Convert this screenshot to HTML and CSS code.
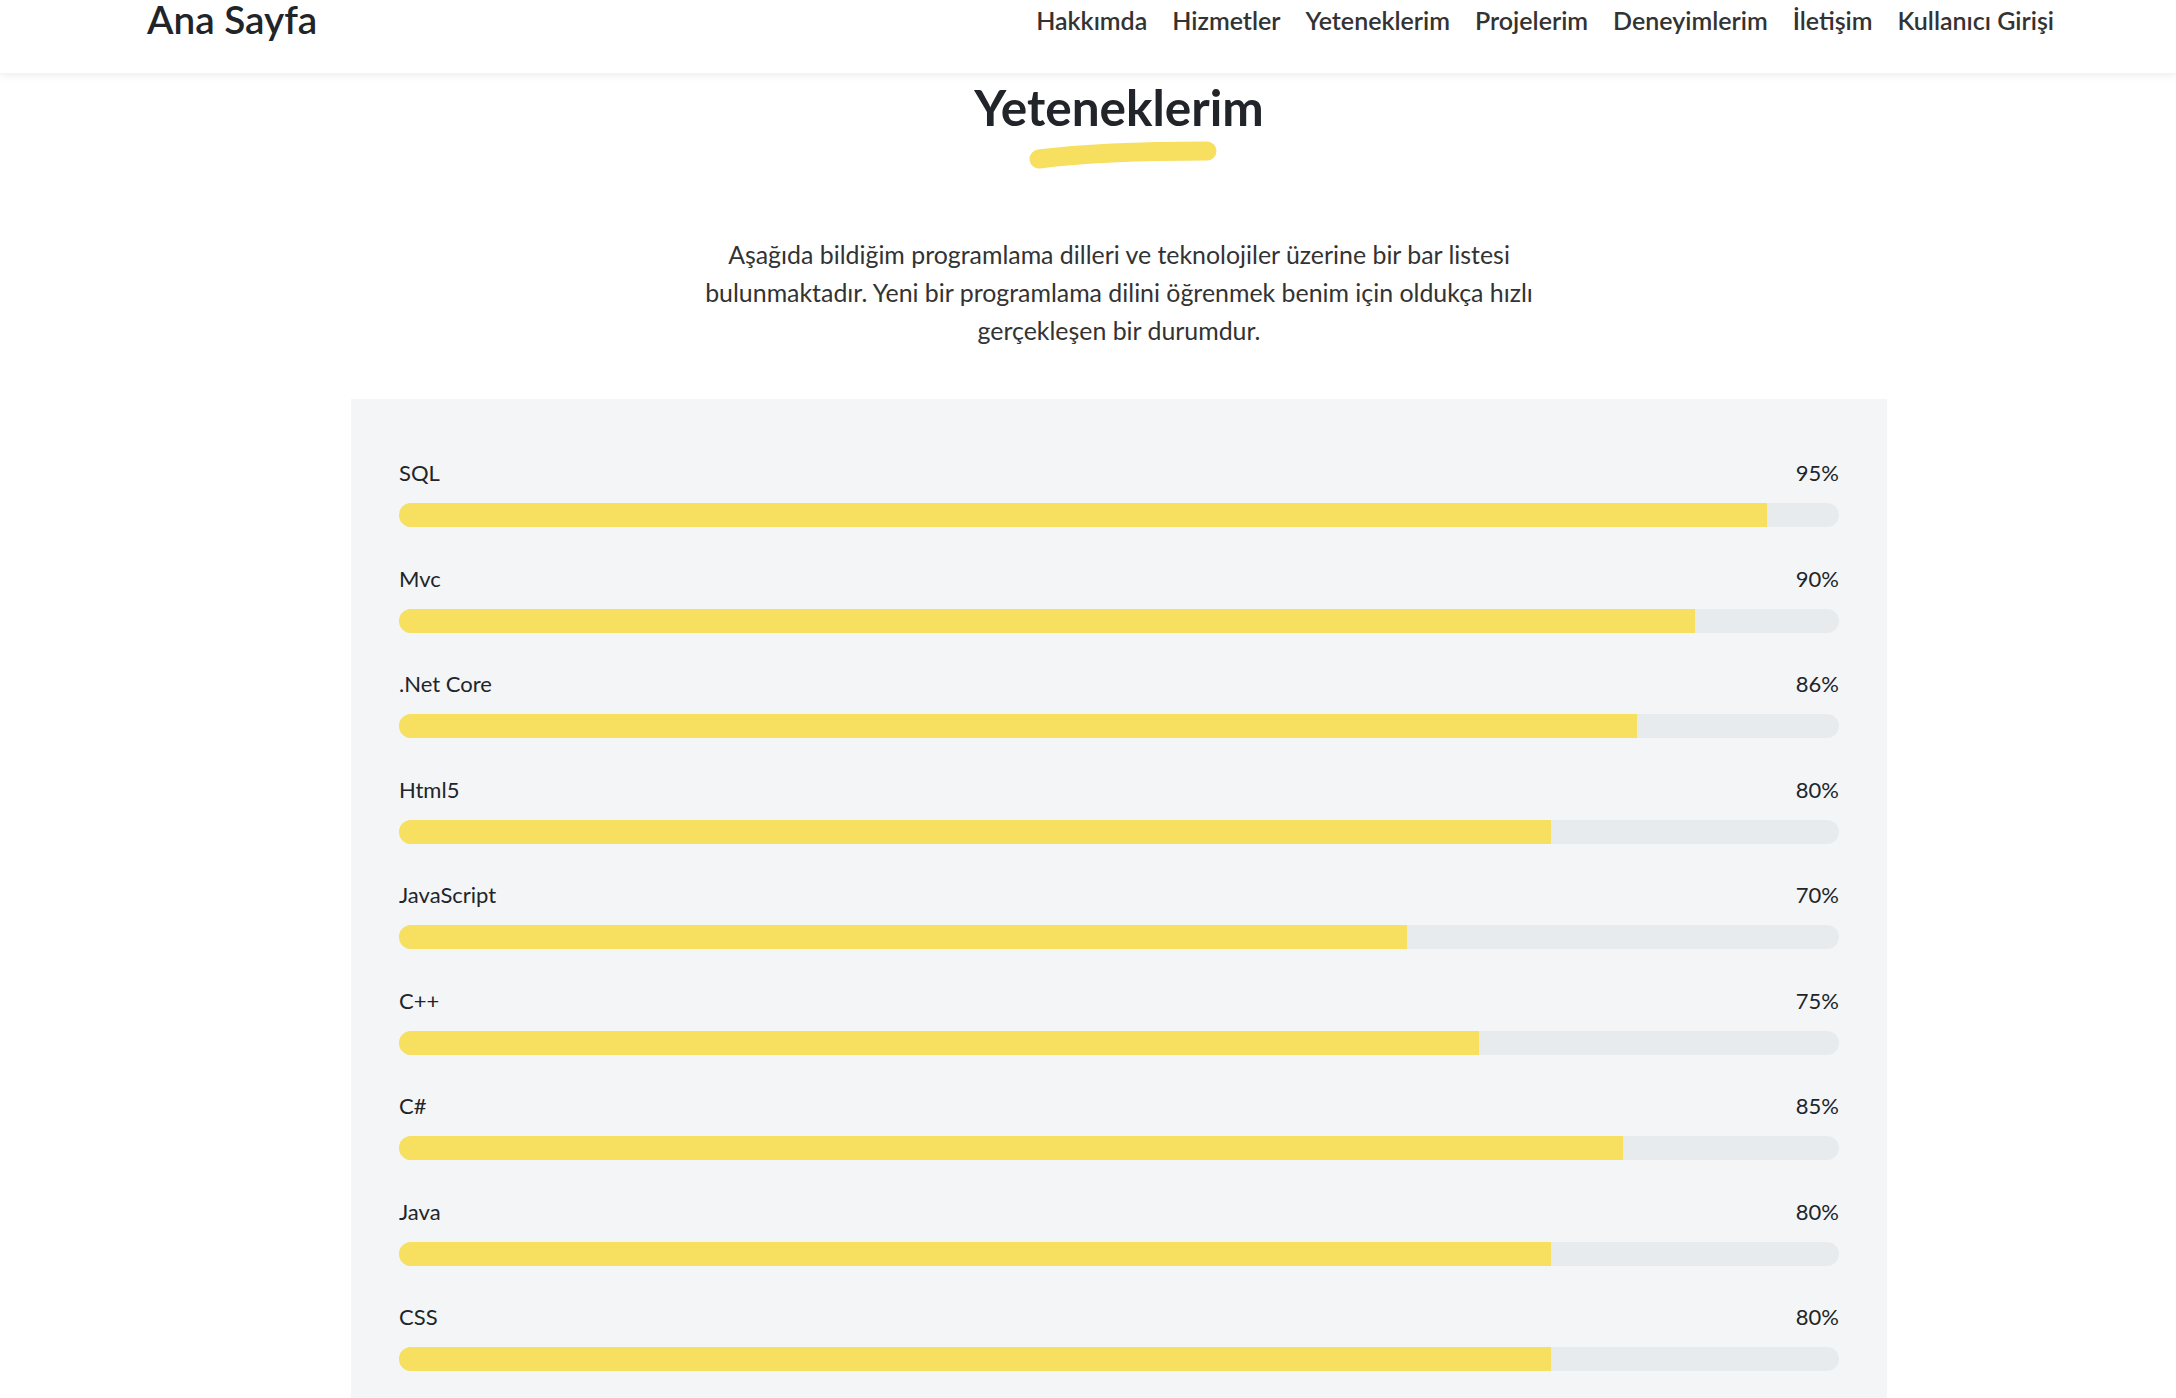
FILE: index.html
```html
<!DOCTYPE html>
<html lang="tr">
<head>
<meta charset="utf-8">
<title>Yeteneklerim</title>
<link rel="stylesheet" href="styles.css">
</head>
<body>
<header class="navbar">
  <a class="brand" href="#">Ana Sayfa</a>
  <nav class="nav">
    <a href="#">Hakkımda</a>
    <a href="#">Hizmetler</a>
    <a href="#">Yeteneklerim</a>
    <a href="#">Projelerim</a>
    <a href="#">Deneyimlerim</a>
    <a href="#">İletişim</a>
    <a href="#">Kullanıcı Girişi</a>
  </nav>
</header>
<main class="section">
  <div class="heading">
    <h2 class="title">Yeteneklerim</h2>
    <svg class="brush" width="190" height="32" viewBox="0 0 190 32" aria-hidden="true">
      <path d="M11 20 C 50 15, 110 12, 179 12" stroke="#f7df5f" stroke-width="19" stroke-linecap="round" fill="none"/>
    </svg>
  </div>
  <p class="lead">Aşağıda bildiğim programlama dilleri ve teknolojiler üzerine bir bar listesi bulunmaktadır. Yeni bir programlama dilini öğrenmek benim için oldukça hızlı gerçekleşen bir durumdur.</p>
  <div class="skills">
    <div class="skill"><div class="skill-head"><span>SQL</span><span>95%</span></div><div class="track"><div class="fill" style="width:95%"></div></div></div>
    <div class="skill"><div class="skill-head"><span>Mvc</span><span>90%</span></div><div class="track"><div class="fill" style="width:90%"></div></div></div>
    <div class="skill"><div class="skill-head"><span>.Net Core</span><span>86%</span></div><div class="track"><div class="fill" style="width:86%"></div></div></div>
    <div class="skill"><div class="skill-head"><span>Html5</span><span>80%</span></div><div class="track"><div class="fill" style="width:80%"></div></div></div>
    <div class="skill"><div class="skill-head"><span>JavaScript</span><span>70%</span></div><div class="track"><div class="fill" style="width:70%"></div></div></div>
    <div class="skill"><div class="skill-head"><span>C++</span><span>75%</span></div><div class="track"><div class="fill" style="width:75%"></div></div></div>
    <div class="skill"><div class="skill-head"><span>C#</span><span>85%</span></div><div class="track"><div class="fill" style="width:85%"></div></div></div>
    <div class="skill"><div class="skill-head"><span>Java</span><span>80%</span></div><div class="track"><div class="fill" style="width:80%"></div></div></div>
    <div class="skill"><div class="skill-head"><span>CSS</span><span>80%</span></div><div class="track"><div class="fill" style="width:80%"></div></div></div>
  </div>
</main>
</body>
</html>
```
FILE: styles.css
```css
* { box-sizing: border-box; }
html, body { margin: 0; padding: 0; }
body {
  font-family: "Lato", "Open Sans", sans-serif;
  color: #212529;
  background: #fff;
  overflow: hidden;
}
.navbar {
  height: 73px;
  display: flex;
  align-items: flex-start;
  justify-content: space-between;
  padding: 0 122px 0 147px;
  background: #fff;
  box-shadow: 0 2px 8px rgba(0,0,0,0.08);
  position: relative;
  z-index: 2;
}
.brand {
  font-size: 38.7px;
  font-weight: 600;
  color: #212529;
  text-decoration: none;
  line-height: 40px;
  margin-top: -1px;
}
.nav {
  display: flex;
  gap: 25px;
  margin-top: 4px;
}
.nav a {
  font-size: 25px;
  font-weight: 600;
  color: #333;
  text-decoration: none;
  line-height: 32px;
}
.section {
  width: 1536px;
  margin-left: 351px;
  display: flex;
  flex-direction: column;
  align-items: center;
}
.heading {
  display: flex;
  flex-direction: column;
  align-items: center;
  margin-top: -1px;
}
.title {
  margin: 0;
  font-size: 49.5px;
  font-weight: 700;
  line-height: 70px;
  color: #212529;
}
.brush {
  display: block;
  margin: -3px 0 0 8px;
}
.lead {
  width: 840px;
  margin: 64px 0 0;
  text-align: center;
  font-size: 24.9px;
  line-height: 38px;
  color: #333;
}
.skills {
  align-self: stretch;
  margin-top: 50px;
  background: #f4f5f7;
  padding: 57px 48px 40px;
}
.skill {
  margin-bottom: 34.5px;
}
.skill-head {
  display: flex;
  justify-content: space-between;
  font-size: 22px;
  line-height: 33px;
  color: #212529;
}
.track {
  margin-top: 14px;
  height: 24px;
  border-radius: 12px;
  background: #e8ebee;
  overflow: hidden;
}
.fill {
  height: 100%;
  background: #f7df5f;
}
```
